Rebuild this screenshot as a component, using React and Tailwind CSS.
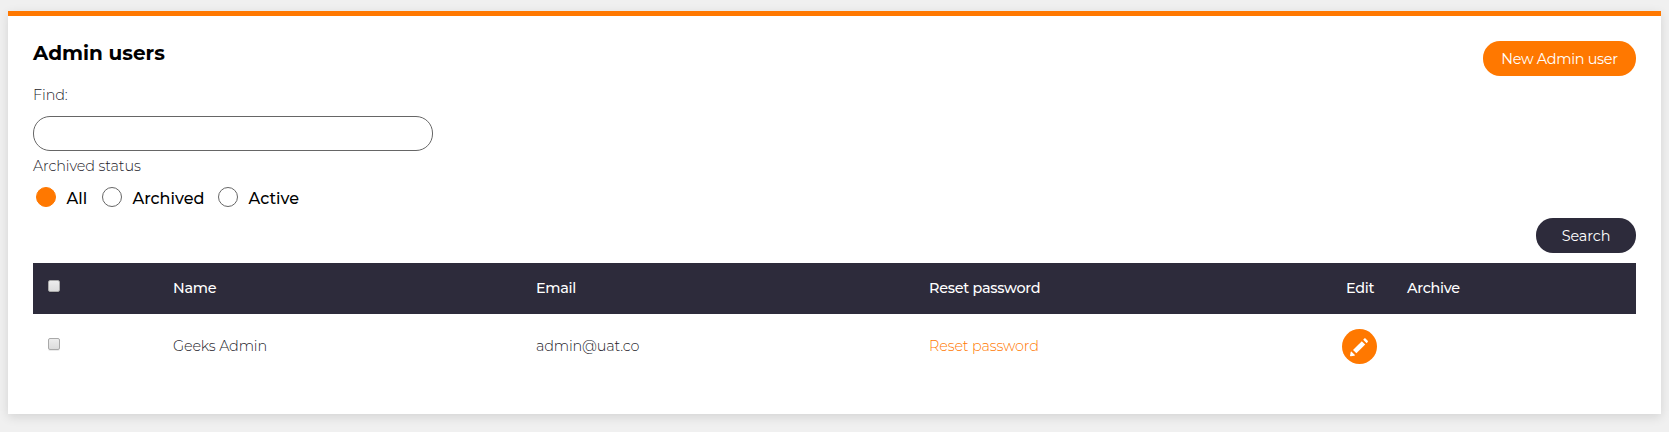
const columns = "grid grid-cols-[140px_363px_393px_413px_65px_1fr] items-center";

function Radio({ label, checked, className }) {
  return (
    <label className={`flex items-start ${className}`}>
      <span
        className={`size-5 shrink-0 rounded-full border ${
          checked ? "border-[#ff7800] bg-[#ff7800]" : "border-[#666] bg-white"
        }`}
      />
      <span className="mt-0.5 ml-[10.5px] text-[16px] leading-5 font-[480] text-black">{label}</span>
    </label>
  );
}

function Check({ className }) {
  return (
    <span
      className={`ml-[15px] block size-3 rounded-[2px] border border-[#a9a9a9] bg-linear-to-b from-[#ededed] to-[#dcdcdc] shadow-[0_1px_0_rgba(0,0,0,0.08)] ${className}`}
    />
  );
}

function Pencil() {
  return (
    <svg viewBox="0 0 35 35" className="size-[35px]" fill="#fff">
      <circle cx="17.5" cy="17.5" r="17.5" fill="#ff7800" />
      <path d="M8 26.800l.7-3.800c.1-.6.500-.7.900-.3l3.100 3.100c.4.4.3.800-.3.900L9 27.200c-.7.1-1.100 0-1-.4z" />
      <path d="M11 20.900l8.800-8.700 3.400 3.400-8.800 8.700z" />
      <path d="M21.200 10.800l1.100-1.200c.4-.4.8-.4 1.200 0l2.200 2.200c.4.4.4.8 0 1.200l-1.100 1.200z" />
    </svg>
  );
}

export default function App() {
  return (
    <div className="h-[432px] overflow-hidden bg-[#f0f0f0] px-2 pt-[11px] font-['Montserrat','Inter',sans-serif] text-[14.4px] tracking-[-0.1px] text-[#1d1b2a]">
      <main className="h-[403px] border-t-5 border-[#ff7800] bg-white px-[25px] pt-[25px] shadow-[0_3px_10px_rgba(0,0,0,0.12)]">
        <div className="flex h-[42px] items-start justify-between">
          <h1 className="text-[20px] leading-6 font-bold tracking-normal text-black">Admin users</h1>
          <button className="h-[35px] w-[153px] rounded-[17px] bg-[#ff7800] pt-[3px] font-[450] tracking-[-0.3px] text-white">New Admin user</button>
        </div>
        <label className="block h-[33px] leading-6 font-light">Find:</label>
        <input className="block h-[35px] w-[400px] rounded-[17px] border border-[#666] px-4" />
        <div className="mt-[3px] h-[33px] leading-6 font-light">Archived status</div>
        <div className="flex h-[31px] items-start pl-[3px] tracking-normal">
          <Radio label="All" checked className="w-[66px]" />
          <Radio label="Archived" className="w-[116px]" />
          <Radio label="Active" />
        </div>
        <div className="flex h-[45px] justify-end">
          <button className="h-[35px] w-[100px] rounded-[17px] bg-[#2d2b3b] pt-[3px] font-[450] text-white">Search</button>
        </div>
        <div className={`${columns} h-[51px] bg-[#2d2b3b] font-[480] tracking-[-0.28px] text-white`}>
          <Check className="mb-[6px]" />
          <span>Name</span>
          <span>Email</span>
          <span>Reset password</span>
          <span className="pl-1">Edit</span>
          <span>Archive</span>
        </div>
        <div className={`${columns} h-[65px] font-light tracking-[-0.15px]`}>
          <Check className="mb-[6px]" />
          <span>Geeks Admin</span>
          <span>admin@uat.co</span>
          <a className="text-[#ff7800]">Reset password</a>
          <Pencil />
        </div>
      </main>
    </div>
  );
}
